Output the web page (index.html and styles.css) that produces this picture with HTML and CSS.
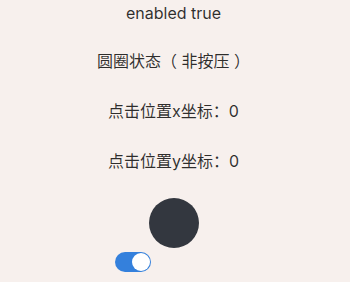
FILE: index.html
```html
<!DOCTYPE html>
<html>
<head>
<meta charset="utf-8">
<link rel="stylesheet" href="styles.css">
</head>
<body>
<div class="page">
  <div class="label first">enabled true</div>
  <div class="label second">圆圈状态（ 非按压 ）</div>
  <div class="label">点击位置x坐标：0</div>
  <div class="label">点击位置y坐标：0</div>
  <div class="circle"></div>
  <div class="toggle"><div class="knob"></div></div>
</div>
</body>
</html>
```
FILE: styles.css
```css
html, body {
  margin: 0;
  padding: 0;
  background: #f7f0ed;
}
.page {
  width: 347px;
  height: 282px;
  display: flex;
  flex-direction: column;
  align-items: center;
  font-family: Inter, "Noto Sans CJK SC", sans-serif;
  font-size: 16px;
  color: rgba(0, 0, 0, 0.82);
}
.label {
  height: 22px;
  line-height: 22px;
  margin-top: 28px;
  white-space: nowrap;
}
.label.first {
  margin-top: 2px;
}
.label.second {
  margin-top: 26px;
}
.circle {
  width: 50px;
  height: 50px;
  border-radius: 50%;
  background: #33373f;
  margin-top: 26px;
}
.toggle {
  align-self: flex-start;
  margin-left: 115px;
  margin-top: 4px;
  width: 36px;
  height: 20px;
  border-radius: 10px;
  background: #3480dc;
  display: flex;
  align-items: center;
  justify-content: flex-end;
  padding: 0 1px;
  box-sizing: border-box;
}
.knob {
  width: 18px;
  height: 18px;
  border-radius: 50%;
  background: #fff;
}
```
